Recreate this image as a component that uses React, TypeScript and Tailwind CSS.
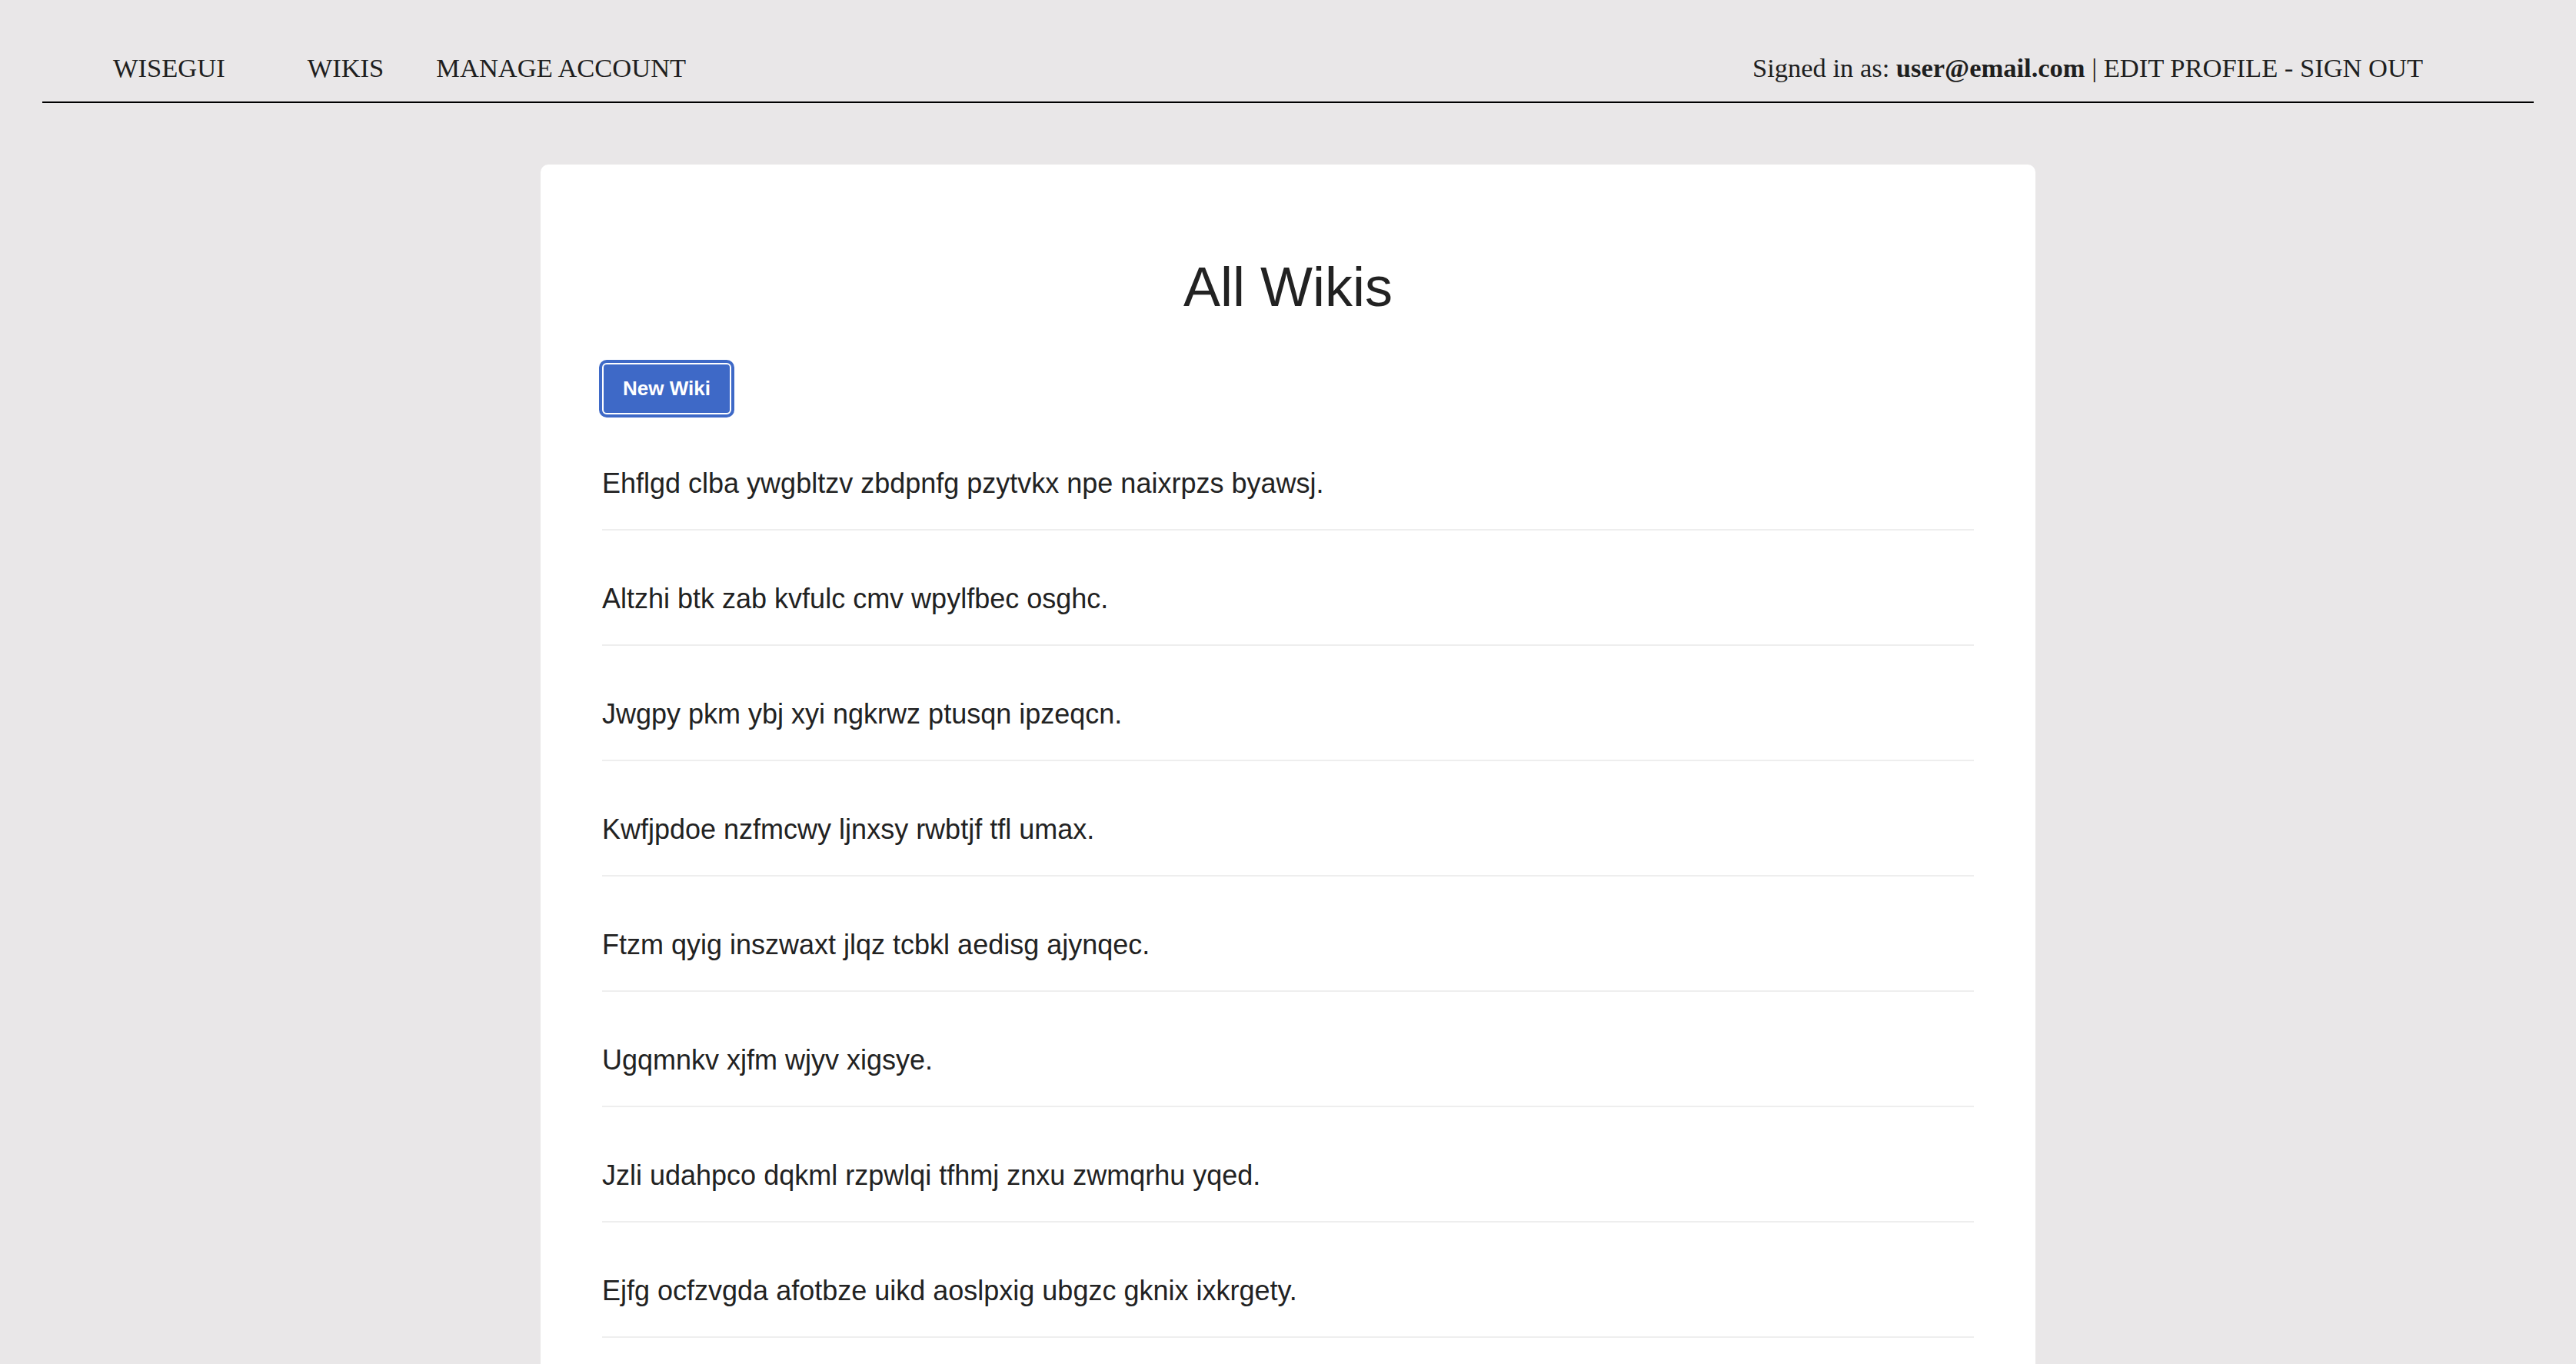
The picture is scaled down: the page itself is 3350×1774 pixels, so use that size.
import React from "react";

const rows = [
  "Ehflgd clba ywgbltzv zbdpnfg pzytvkx npe naixrpzs byawsj.",
  "Altzhi btk zab kvfulc cmv wpylfbec osghc.",
  "Jwgpy pkm ybj xyi ngkrwz ptusqn ipzeqcn.",
  "Kwfjpdoe nzfmcwy ljnxsy rwbtjf tfl umax.",
  "Ftzm qyig inszwaxt jlqz tcbkl aedisg ajynqec.",
  "Ugqmnkv xjfm wjyv xigsye.",
  "Jzli udahpco dqkml rzpwlqi tfhmj znxu zwmqrhu yqed.",
  "Ejfg ocfzvgda afotbze uikd aoslpxig ubgzc gknix ixkrgety.",
];

export default function App() {
  return (
    <div className="min-h-screen bg-[#e9e7e8] pb-[60px]">
      <nav
        className="mx-[55px] flex items-center justify-between border-b-2 border-black pt-[68px] pb-[24px] pl-[92px] pr-[144px] text-[34.5px] leading-[40px] text-[#1f1f1f]"
        style={{ fontFamily: '"Liberation Serif", "Times New Roman", serif' }}
      >
        <div className="flex items-center">
          <a className="mr-[107px]">WISEGUI</a>
          <a className="mr-[68px]">WIKIS</a>
          <a>MANAGE ACCOUNT</a>
        </div>
        <div>
          Signed in as: <b>user@email.com</b> | EDIT PROFILE - SIGN OUT
        </div>
      </nav>

      <main
        className="mx-auto mt-[80px] w-[1944px] rounded-[10px] bg-white px-[80px] pt-[116px] pb-[200px] text-[#222222]"
        style={{ fontFamily: '"Liberation Sans", Arial, sans-serif' }}
      >
        <h1 className="text-center text-[72px] leading-[86px] font-normal text-[#222222]">
          All Wikis
        </h1>
        <div className="mt-[56px] flex">
          <button className="h-[67px] w-[168px] rounded-[6px] border-2 border-white bg-[#3e69c7] text-[26px] font-bold text-white ring-4 ring-[#3e69c7]">
            New Wiki
          </button>
        </div>
        <ul className="mt-[1px]">
          {rows.map((r, i) => (
            <li
              key={i}
              className="border-b-2 border-[#eeeeee] pt-[62px] pb-[32px] text-[36px] leading-[54px]"
            >
              {r}
            </li>
          ))}
        </ul>
      </main>
    </div>
  );
}
